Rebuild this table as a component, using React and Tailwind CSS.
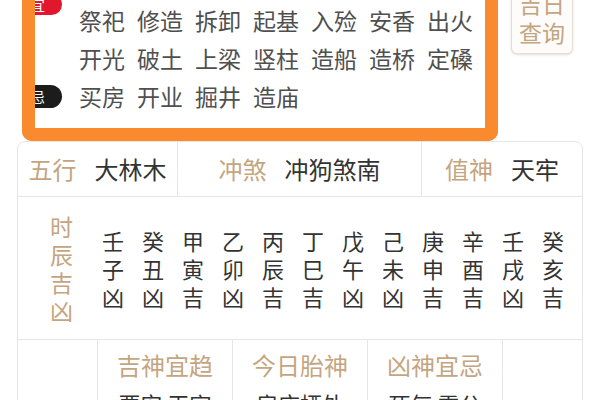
const topRows = [
  ['祭祀', '修造', '拆卸', '起基', '入殓', '安香', '出火'],
  ['开光', '破土', '上梁', '竖柱', '造船', '造桥', '定磉'],
  ['买房', '开业', '掘井', '造庙'],
];

const hours = [
  ['壬', '子', '凶'], ['癸', '丑', '凶'], ['甲', '寅', '吉'], ['乙', '卯', '凶'],
  ['丙', '辰', '吉'], ['丁', '巳', '吉'], ['戊', '午', '凶'], ['己', '未', '凶'],
  ['庚', '申', '吉'], ['辛', '酉', '吉'], ['壬', '戌', '凶'], ['癸', '亥', '吉'],
];

function Pair({ label, value }) {
  return (
    <div className="flex items-center justify-center gap-[18px]">
      <span className="text-[#c4a57f]">{label}</span>
      <span className="text-[#333]">{value}</span>
    </div>
  );
}

export default function App() {
  return (
    <div className="w-[600px] h-[400px] overflow-hidden bg-white font-['Noto_Sans_CJK_SC','Noto_Sans',sans-serif]">
      {/* 宜忌 box */}
      <div className="flex items-start">
        <div className="ml-[22px] w-[476px] border-x-[13px] border-b-[13px] border-[#f98b2e] rounded-b-[10px] bg-white">
          <div className="relative overflow-hidden h-[128px] pt-[1px] pl-[44px] text-[23px] leading-[38px] text-[#4f4f4f]">
            <div className="absolute left-0 top-[-6px] w-[27px] h-[21px] bg-[#e2162c] rounded-r-full flex items-center text-white text-[15px] leading-none">
              <span className="ml-[-5px]">宜</span>
            </div>
            <div className="absolute left-0 top-[85px] w-[27px] h-[23px] bg-[#1c1c1c] rounded-r-full flex items-center text-white text-[15px] leading-none">
              <span className="ml-[-5px]">忌</span>
            </div>
            {topRows.map((row, i) => (
              <div key={i} className="flex gap-[12px] h-[38px]">
                {row.map((w) => (
                  <span key={w}>{w}</span>
                ))}
              </div>
            ))}
          </div>
        </div>
        <div className="ml-[13px] mt-[-12px] w-[62px] pb-[6px] border border-[#e4ded5] rounded-[6px] bg-[#fdfcfa] shadow-sm text-center text-[23px] leading-[29px] text-[#c3a57f]">
          <div>吉日</div>
          <div>查询</div>
        </div>
      </div>

      {/* table */}
      <div className="ml-[17px] w-[566px] border border-[#e6e6e6] rounded-t-[8px]">
        <div className="grid grid-cols-[159px_244px_161px] h-[55px] border-b border-[#e6e6e6] text-[24px] leading-[30px]">
          <Pair label="五行" value="大林木" />
          <div className="border-l border-[#e6e6e6] flex justify-center">
            <Pair label="冲煞" value="冲狗煞南" />
          </div>
          <div className="border-l border-[#e6e6e6] flex justify-center">
            <Pair label="值神" value="天牢" />
          </div>
        </div>

        <div className="flex items-center h-[143px] border-b border-[#e6e6e6]">
          <div className="w-[75px] pl-[32px] flex flex-col text-[23px] leading-[28px] text-[#c4a57f]">
            <span>时</span>
            <span>辰</span>
            <span>吉</span>
            <span>凶</span>
          </div>
          <div className="grid grid-cols-12 w-[480px] text-[22px] leading-[28px] text-[#333]">
            {hours.map((h, i) => (
              <div key={i} className="flex flex-col items-center">
                {h.map((c, j) => (
                  <span key={j}>{c}</span>
                ))}
              </div>
            ))}
          </div>
        </div>

        <div className="grid grid-cols-[79px_135px_135px_135px_80px] h-[80px] text-center">
          <div />
          <div className="border-l border-[#e6e6e6] pt-[10px]">
            <div className="text-[24px] leading-[30px] text-[#c4a57f]">吉神宜趋</div>
            <div className="mt-[8px] text-[22px] leading-[30px] text-[#333]">要安 玉宇</div>
          </div>
          <div className="border-l border-[#e6e6e6] pt-[10px]">
            <div className="text-[24px] leading-[30px] text-[#c4a57f]">今日胎神</div>
            <div className="mt-[8px] text-[22px] leading-[30px] text-[#333]">房床栖外</div>
          </div>
          <div className="border-l border-[#e6e6e6] pt-[10px]">
            <div className="text-[24px] leading-[30px] text-[#c4a57f]">凶神宜忌</div>
            <div className="mt-[8px] text-[22px] leading-[30px] text-[#333]">死气 雷公</div>
          </div>
          <div className="border-l border-[#e6e6e6]" />
        </div>
      </div>
    </div>
  );
}
